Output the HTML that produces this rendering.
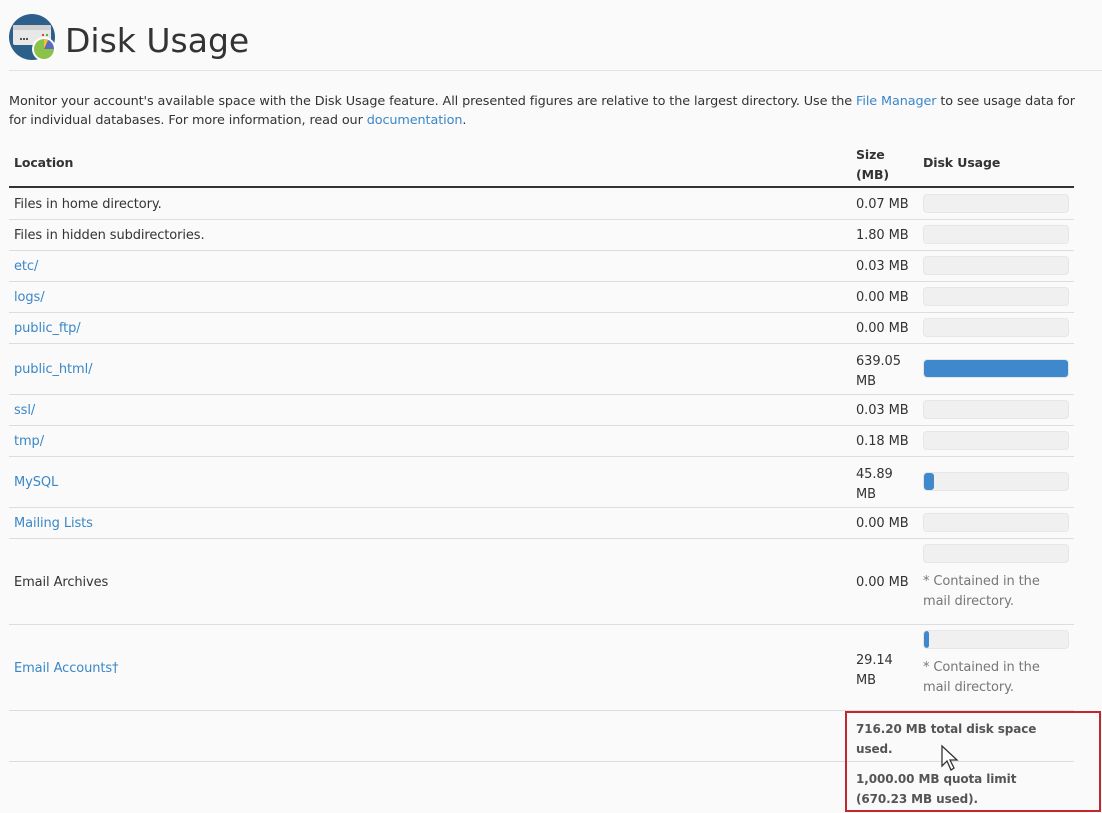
<!DOCTYPE html>
<html><head><meta charset="utf-8"><style>
body{margin:0;width:1102px;height:813px;background:#fafafa;font-family:"DejaVu Sans","Liberation Sans",sans-serif;font-size:13px;letter-spacing:-0.1px;color:#333;position:relative;overflow:hidden}
.a{position:absolute;white-space:nowrap}
a{color:#3a87c8;text-decoration:none}
.l{position:absolute;left:9px;width:1065px;height:1px;background:#ddd}
.bar{position:absolute;left:923px;width:146px;height:19px;border-radius:4px;background:#f0f0f0;border:1px solid #e6e6e6;box-sizing:border-box;overflow:hidden}
.bar i{position:absolute;left:0;top:0;bottom:0;background:#4088cc;border-radius:3px}
.n{color:#777}
</style></head><body>
<svg class="a" style="left:9px;top:14px" width="48" height="48" viewBox="0 0 48 48">
<circle cx="23" cy="23" r="23" fill="#2d5f8b"/>
<rect x="4" y="14" width="38" height="17" rx="2" fill="#e8e8e8"/>
<rect x="4" y="11" width="38" height="5" rx="1" fill="#cfcfcf"/>
<circle cx="12" cy="25" r="1.1" fill="#444"/><circle cx="15" cy="25" r="1.1" fill="#444"/><circle cx="18" cy="25" r="1.1" fill="#444"/>
<circle cx="34" cy="21" r="1.1" fill="#d33"/><circle cx="38" cy="21" r="1.1" fill="#4a4"/>
<circle cx="35" cy="35" r="12" fill="#fff"/>
<path d="M35 35 L35 25 A10 10 0 1 0 45 35Z" fill="#8bc34a"/>
<path d="M35 35 L35 25 A10 10 0 0 1 45 35Z" fill="#5c6bc0"/>
<path d="M35 35 L35 25 A10 10 0 0 1 39 26Z" fill="#f4c430"/>
</svg>
<div class="a" style="left:65px;top:21px;font-size:33px;letter-spacing:0;color:#333">Disk Usage</div>
<div class="l" style="top:70px;left:9px;width:1093px;background:#e3e3e3"></div>
<div class="a" style="left:9px;top:92px;line-height:19px;font-size:12.8px">Monitor your account's available space with the Disk Usage feature. All presented figures are relative to the largest directory. Use the <a>File Manager</a> to see usage data for<br>for individual databases. For more information, read our <a>documentation</a>.</div>
<div class="a" style="left:14px;top:155px;font-weight:bold;font-size:12.5px">Location</div>
<div class="a" style="left:856px;top:145px;font-weight:bold;line-height:20px;font-size:12.5px">Size<br>(MB)</div>
<div class="a" style="left:923px;top:155px;font-weight:bold;font-size:12.5px">Disk Usage</div>
<div class="l" style="top:186px;height:2px;background:#333"></div>
<div class="l" style="top:219px"></div><div class="l" style="top:250px"></div><div class="l" style="top:281px"></div><div class="l" style="top:312px"></div><div class="l" style="top:343px"></div><div class="l" style="top:394px"></div><div class="l" style="top:425px"></div><div class="l" style="top:456px"></div><div class="l" style="top:507px"></div><div class="l" style="top:538px"></div><div class="l" style="top:624px"></div><div class="l" style="top:710px"></div><div class="l" style="top:761px"></div>

<div class="a" style="left:14px;top:197px">Files in home directory.</div><div class="a" style="left:856px;top:197px">0.07 MB</div><div class="bar" style="top:194px"></div>
<div class="a" style="left:14px;top:228px">Files in hidden subdirectories.</div><div class="a" style="left:856px;top:228px">1.80 MB</div><div class="bar" style="top:225px"></div>
<div class="a" style="left:14px;top:259px"><a>etc/</a></div><div class="a" style="left:856px;top:259px">0.03 MB</div><div class="bar" style="top:256px"></div>
<div class="a" style="left:14px;top:290px"><a>logs/</a></div><div class="a" style="left:856px;top:290px">0.00 MB</div><div class="bar" style="top:287px"></div>
<div class="a" style="left:14px;top:321px"><a>public_ftp/</a></div><div class="a" style="left:856px;top:321px">0.00 MB</div><div class="bar" style="top:318px"></div>
<div class="a" style="left:14px;top:362px"><a>public_html/</a></div><div class="a" style="left:856px;top:352px;line-height:20px">639.05<br>MB</div><div class="bar" style="top:359px"><i style="width:146px"></i></div>
<div class="a" style="left:14px;top:403px"><a>ssl/</a></div><div class="a" style="left:856px;top:403px">0.03 MB</div><div class="bar" style="top:400px"></div>
<div class="a" style="left:14px;top:434px"><a>tmp/</a></div><div class="a" style="left:856px;top:434px">0.18 MB</div><div class="bar" style="top:431px"></div>
<div class="a" style="left:14px;top:475px"><a>MySQL</a></div><div class="a" style="left:856px;top:465px;line-height:20px">45.89<br>MB</div><div class="bar" style="top:472px"><i style="width:10px"></i></div>
<div class="a" style="left:14px;top:516px"><a>Mailing Lists</a></div><div class="a" style="left:856px;top:516px">0.00 MB</div><div class="bar" style="top:513px"></div>
<div class="a" style="left:14px;top:575px">Email Archives</div><div class="a" style="left:856px;top:575px">0.00 MB</div><div class="bar" style="top:544px"></div><div class="a n" style="left:923px;top:572px;line-height:20px">* Contained in the<br>mail directory.</div>
<div class="a" style="left:14px;top:661px"><a>Email Accounts†</a></div><div class="a" style="left:856px;top:651px;line-height:20px">29.14<br>MB</div><div class="bar" style="top:630px"><i style="width:5px"></i></div><div class="a n" style="left:923px;top:658px;line-height:20px">* Contained in the<br>mail directory.</div>
<div class="a" style="left:856px;top:719px;line-height:20px;font-weight:bold;font-size:12px;color:#555">716.20 MB total disk space<br>used.</div>
<div class="a" style="left:856px;top:769px;line-height:20px;font-weight:bold;font-size:12px;color:#555">1,000.00 MB quota limit<br>(670.23 MB used).</div>
<div class="a" style="left:845px;top:711px;width:256px;height:101px;border:2px solid #c0282d;box-sizing:border-box"></div>
<svg class="a" style="left:940px;top:744px" width="20" height="28" viewBox="0 0 20 28"><path d="M2 2 L2 22 L7 17 L11 26 L14 24 L10 16 L17 16 Z" fill="#fff" stroke="#333" stroke-width="1.3"/></svg>
</body></html>
